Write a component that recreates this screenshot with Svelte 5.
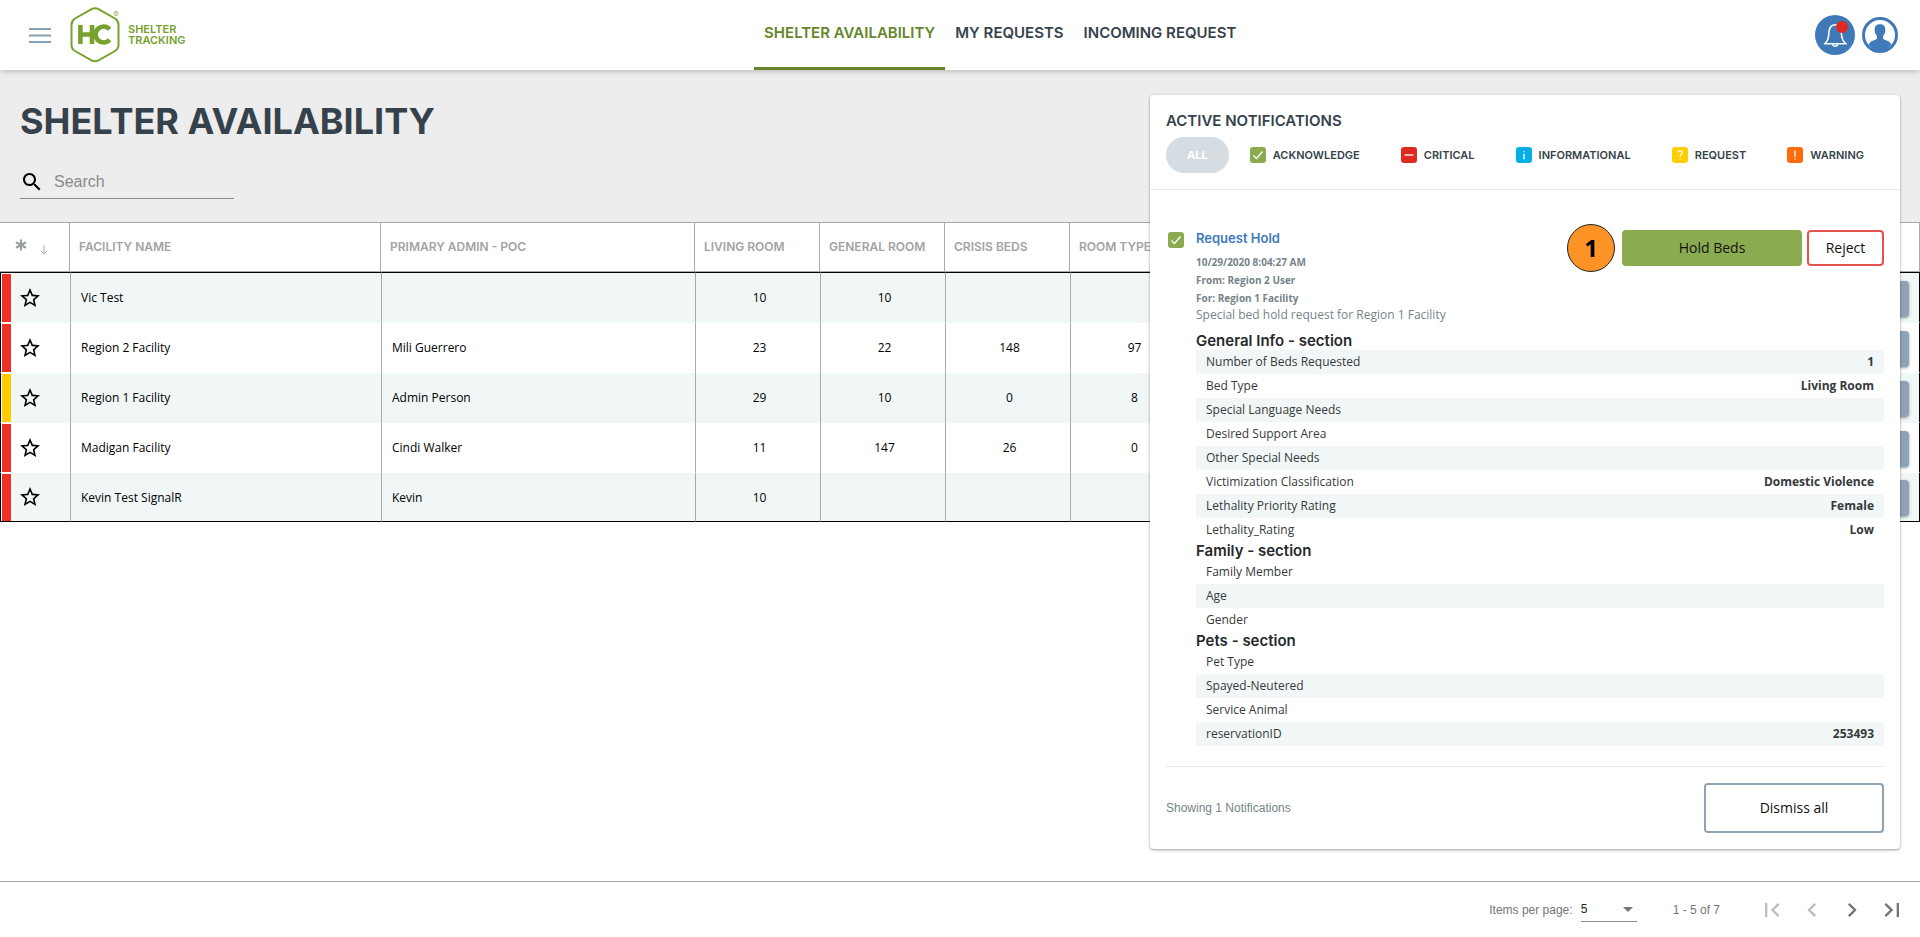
<script>
  const tabs = ['SHELTER AVAILABILITY', 'MY REQUESTS', 'INCOMING REQUEST'];
  const columns = ['FACILITY NAME', 'PRIMARY ADMIN - POC', 'LIVING ROOM', 'GENERAL ROOM', 'CRISIS BEDS', 'ROOM TYPE 4'];
  const facilities = [
    { name: 'Vic Test', poc: '', counts: ['10', '10', '', ''], status: 'red' },
    { name: 'Region 2 Facility', poc: 'Mili Guerrero', counts: ['23', '22', '148', '97'], status: 'red' },
    { name: 'Region 1 Facility', poc: 'Admin Person', counts: ['29', '10', '0', '8'], status: 'yellow' },
    { name: 'Madigan Facility', poc: 'Cindi Walker', counts: ['11', '147', '26', '0'], status: 'red' },
    { name: 'Kevin Test SignalR', poc: 'Kevin', counts: ['10', '', '', ''], status: 'red' }
  ];
  const filters = [
    { label: 'ACKNOWLEDGE', kind: 'check' },
    { label: 'CRITICAL', kind: 'minus' },
    { label: 'INFORMATIONAL', kind: 'info' },
    { label: 'REQUEST', kind: 'question' },
    { label: 'WARNING', kind: 'bang' }
  ];
  const details = [
    { heading: 'General Info - section' },
    { label: 'Number of Beds Requested', value: '1' },
    { label: 'Bed Type', value: 'Living Room' },
    { label: 'Special Language Needs', value: '' },
    { label: 'Desired Support Area', value: '' },
    { label: 'Other Special Needs', value: '' },
    { label: 'Victimization Classification', value: 'Domestic Violence' },
    { label: 'Lethality Priority Rating', value: 'Female' },
    { label: 'Lethality_Rating', value: 'Low' },
    { heading: 'Family - section' },
    { label: 'Family Member', value: '' },
    { label: 'Age', value: '' },
    { label: 'Gender', value: '' },
    { heading: 'Pets - section' },
    { label: 'Pet Type', value: '' },
    { label: 'Spayed-Neutered', value: '' },
    { label: 'Service Animal', value: '' },
    { label: 'reservationID', value: '253493' }
  ];
  const pagers = [
    { name: 'First page', d: 'M18.41 16.59L13.82 12l4.59-4.59L17 6l-6 6 6 6zM6 6h2v12H6z', off: true },
    { name: 'Previous page', d: 'M15.41 7.41L14 6l-6 6 6 6 1.41-1.41L10.83 12z', off: true },
    { name: 'Next page', d: 'M10 6L8.59 7.41 13.17 12l-4.58 4.59L10 18l6-6z', off: false },
    { name: 'Last page', d: 'M5.59 7.41L10.18 12l-4.59 4.59L7 18l6-6-6-6zM16 6h2v12h-2z', off: false }
  ];
</script>

{#snippet mark(kind)}
  <svg class="mark {kind}" viewBox="0 0 16 16" aria-hidden="true">
    <rect width="16" height="16" rx="3" />
    {#if kind === 'check'}
      <path d="M3.5 8.5l3 3 6-7" />
    {:else if kind === 'minus'}
      <path d="M3.5 8h9" />
    {:else if kind === 'info'}
      <path d="M8 4v1.3M8 6.8v5.4" />
    {:else if kind === 'question'}
      <path d="M5.8 5.6c.2-2.3 4.4-2.3 4.4 0C10.200 7.200 8 7.400 8 9.600M8 11.200v1.300" />
    {:else}
      <path d="M8 3.500v6.300M8 11.200v1.300" />
    {/if}
  </svg>
{/snippet}

<div class="page">
  <header class="topbar">
    <div class="brand">
      <button class="plain" aria-label="Menu">
        <svg width="24" height="18" viewBox="0 0 24 18"><path d="M1 3h22M1 9.500h22M1 16h22" stroke="#86a0b5" stroke-width="1.800" fill="none" /></svg>
      </button>
      <a class="logo" href="#home">
        <svg width="50" height="56" viewBox="0 0 50 56" aria-hidden="true">
          <path d="M21.500 2.200 Q25 .4 28.500 2.200 L45 11.500 Q48.500 13.700 48.500 17.500 V38 Q48.500 42 45 44 L28.500 53.300 Q25 55 21.500 53.300 L5 44 Q1.500 42 1.500 38 V17.500 Q1.500 13.700 5 11.500 Z" fill="none" stroke="#76a22d" stroke-width="2" />
          <path d="M10.400 18v19M22 18v19M10.400 27.500h11.600" fill="none" stroke="#76a22d" stroke-width="4.600" />
          <path d="M39.600 22.200A8 8 0 1 0 39.600 32.800" fill="none" stroke="#76a22d" stroke-width="4.600" />
          <circle cx="46" cy="6.500" r="2.200" fill="none" stroke="#76a22d" stroke-width=".6" />
          <path d="M45.300 7.700v-2.400h1q.7.600 0 1.300h-1m.900 0l.6 1.100" fill="none" stroke="#76a22d" stroke-width=".4" />
        </svg>
        <span class="word"><span>SHELTER</span><span>TRACKING</span></span>
      </a>
    </div>
    <nav>
      {#each tabs as tab, i}
        <a href="#tab" class:active={i === 0}>{tab}</a>
      {/each}
    </nav>
    <div class="account">
      <button class="plain" aria-label="Notifications">
        <svg width="40" height="40" viewBox="0 0 40 40">
          <circle cx="20" cy="20" r="20" fill="#4079b8" />
          <path d="M9.500 28.800Q13.500 26 13.700 19.500C13.900 12.500 16 9.800 20 9.800S26.300 12.500 26.500 19.500Q27 26 31.200 28.800Z" fill="none" stroke="#fff" stroke-width="1.600" stroke-linejoin="round" />
          <path d="M17.300 29.500q2.900 3.600 5.800 0" fill="none" stroke="#fff" stroke-width="1.500" />
          <circle cx="27" cy="12" r="6" fill="#df2a20" />
        </svg>
      </button>
      <button class="plain" aria-label="Account">
        <svg width="36" height="36" viewBox="0 0 36 36">
          <circle cx="18" cy="18" r="16.500" fill="#fff" stroke="#4079b8" stroke-width="3" />
          <path d="M18 7.200c-4 0-5.700 2.700-5.300 6.600.3 2.600 1.300 4.200 2.300 5.600v2.400c-1.600 1.400-6.500 1.800-8.200 5.400C9 31 13 33.500 18 33.500s9-2.500 11.200-6.300c-1.700-3.600-6.600-4-8.200-5.400v-2.400c1-1.400 2-3 2.300-5.600.4-3.900-1.300-6.600-5.300-6.600z" fill="#4079b8" />
        </svg>
      </button>
    </div>
  </header>

  <main>
    <section class="intro">
      <h1>SHELTER AVAILABILITY</h1>
      <label class="search">
        <svg width="24" height="24" viewBox="0 0 24 24" aria-hidden="true"><path d="M15.500 14h-.79l-.28-.27C15.410 12.590 16 11.110 16 9.500 16 5.910 13.090 3 9.500 3S3 5.910 3 9.500 5.910 16 9.500 16c1.610 0 3.090-.59 4.230-1.570l.27.28v.79l5 4.990L20.490 19l-4.990-5zm-6 0C7.010 14 5 11.990 5 9.500S7.010 5 9.500 5 14 7.010 14 9.500 11.990 14 9.500 14z" /></svg>
        <input type="text" placeholder="Search" aria-label="Search" />
      </label>
    </section>

    <table>
      <colgroup>
        <col class="c-star" /><col class="c-name" /><col class="c-poc" />
        <col class="c-num" /><col class="c-num" /><col class="c-num" /><col class="c-num" /><col />
      </colgroup>
      <thead>
        <tr>
          <th class="sorter">
            <span>
              <svg width="12" height="12" viewBox="0 0 12 12" aria-hidden="true"><path d="M6 .5v11M1 3.200l10 5.600M11 3.200L1 8.800" stroke="#9a9fa3" stroke-width="2.200" /></svg>
              <svg width="8" height="10" viewBox="0 0 8 10" aria-hidden="true"><path d="M4 0v9M.8 5.800L4 9l3.200-3.200" stroke="#a3b0b5" fill="none" /></svg>
            </span>
          </th>
          {#each columns as column}<th>{column}</th>{/each}
          <th></th>
        </tr>
      </thead>
      <tbody>
        {#each facilities as f}
          <tr>
            <td class="lead">
              <div>
                <i class={f.status}></i>
                <button class="plain" aria-label="Favorite {f.name}">
                  <svg width="24" height="24" viewBox="0 0 24 24"><path d="M22 9.240l-7.190-.62L12 2 9.190 8.630 2 9.240l5.460 4.730L5.820 21 12 17.270 18.180 21l-1.630-7.030L22 9.240zM12 15.400l-3.760 2.270 1-4.280-3.320-2.880 4.380-.38L12 6.100l1.710 4.040 4.380.38-3.320 2.880 1 4.280L12 15.400z" /></svg>
                </button>
              </div>
            </td>
            <td>{f.name}</td>
            <td>{f.poc}</td>
            {#each f.counts as count}<td class="num">{count}</td>{/each}
            <td class="act"><button aria-label="Open {f.name}"></button></td>
          </tr>
        {/each}
      </tbody>
    </table>
  </main>

  <footer class="pager">
    <label for="size">Items per page:</label>
    <span class="size">
      <select id="size"><option>5</option></select>
      <svg width="10" height="5" viewBox="0 0 10 5" aria-hidden="true"><path d="M0 0h10L5 5z" fill="#757575" /></svg>
    </span>
    <span class="range">1 - 5 of 7</span>
    <div class="steps">
      {#each pagers as p}
        <button class="plain" class:off={p.off} aria-label={p.name}>
          <svg width="28" height="28" viewBox="0 0 24 24"><path d={p.d} /></svg>
        </button>
      {/each}
    </div>
  </footer>

  <aside class="panel">
    <div class="panel-head">
      <h2>ACTIVE NOTIFICATIONS</h2>
      <div class="filters">
        <button class="chip all">ALL</button>
        {#each filters as f}
          <button class="chip">{@render mark(f.kind)}{f.label}</button>
        {/each}
      </div>
    </div>
    <div class="panel-body">
      {@render mark('check')}
      <div class="note">
        <div class="note-head">
          <div>
            <h3>Request Hold</h3>
            <p class="meta">10/29/2020 8:04:27 AM<br />From: Region 2 User<br />For: Region 1 Facility</p>
            <p class="desc">Special bed hold request for Region 1 Facility</p>
          </div>
          <div class="actions">
            <span class="step">1</span>
            <button class="hold">Hold Beds</button>
            <button class="reject">Reject</button>
          </div>
        </div>
        <div class="details">
          {#each details as d}
            {#if d.heading}
              <h4>{d.heading}</h4>
            {:else}
              <div class="row"><span>{d.label}</span><b>{d.value}</b></div>
            {/if}
          {/each}
        </div>
      </div>
    </div>
    <div class="panel-foot">
      <span>Showing 1 Notifications</span>
      <button class="dismiss">Dismiss all</button>
    </div>
  </aside>
</div>

<style>
  :global(body) { background: #fff; }
  * { box-sizing: border-box; margin: 0; }
  .page {
    position: relative;
    display: flex;
    flex-direction: column;
    min-height: 100vh;
    font-family: "Open Sans", "Noto Sans", sans-serif;
    color: #000;
  }
  button { font-family: inherit; cursor: pointer; }
  .plain { display: flex; padding: 0; border: 0; background: none; }

  .topbar {
    position: relative;
    display: flex;
    justify-content: space-between;
    height: 70px;
    padding: 0 22px 0 28px;
    background: #fff;
    box-shadow: 0 1px 6px rgba(0, 0, 0, 0.25);
  }
  .brand, .account { display: flex; align-items: center; }
  .brand { gap: 18px; }
  .account { gap: 7px; }
  .logo {
    display: flex;
    align-items: center;
    gap: 8px;
    color: #76a22d;
    font: 600 11px/11px Inter, sans-serif;
    text-decoration: none;
  }
  .word { display: flex; flex-direction: column; }
  nav { display: flex; font: 600 15px/20px Inter, sans-serif; }
  nav a {
    padding: 23px 10px 24px;
    border-bottom: 3px solid transparent;
    color: #36424b;
    text-decoration: none;
  }
  nav a.active { color: #668528; border-color: #668528; }

  main { flex: 1; }
  .intro { padding: 31px 20px 23px; background: #ededed; }
  h1 { color: #36424b; font: 700 36px/40px Inter, sans-serif; }
  .search {
    display: flex;
    align-items: center;
    gap: 10px;
    width: 214px;
    height: 34px;
    margin-top: 24px;
    border-bottom: 1px solid #8a8a8a;
  }
  .search svg { flex: none; }
  .search input {
    width: 100%;
    padding: 0;
    border: 0;
    outline: 0;
    background: none;
    font: 16px/20px "Liberation Sans", sans-serif;
  }
  .search input::placeholder { color: #8a8a8a; }

  table { width: 100%; border-spacing: 0; table-layout: fixed; }
  .c-star { width: 70px; }
  .c-name { width: 311px; }
  .c-poc { width: 314px; }
  .c-num { width: 125px; }
  th {
    height: 50px;
    padding: 0 0 0 9px;
    border: solid #a8a8a8;
    border-width: 1px 1px 1px 0;
    color: #a3a3a3;
    font: 600 12px/16px Inter, sans-serif;
    text-align: left;
    white-space: nowrap;
  }
  .sorter { padding-left: 15px; }
  .sorter span { display: flex; align-items: flex-end; gap: 13px; }
  .sorter svg:first-child { margin-bottom: 4px; }
  tbody tr { background: #fff; --line: #fff; }
  tbody tr:nth-child(odd) { background: #f1f7f7; --line: #f1f7f7; }
  td {
    height: 50px;
    padding: 0 0 0 10px;
    border: solid #a8a8a8;
    border-width: 0 0 1px 1px;
    border-bottom-color: var(--line);
    font-size: 12px;
    line-height: 18px;
  }
  tbody tr:first-child td { height: 51px; border-top: 1px solid #000; }
  tbody tr:last-child td { height: 49px; padding-top: 2px; border-bottom-color: #000; }
  .num { padding: 0 0 0 3px; text-align: center; }
  .lead, tbody tr:last-child .lead { padding: 0; border-left-color: #000; }
  .lead div { display: flex; align-items: center; gap: 7px; height: 49px; }
  tbody tr:last-child .lead div { height: 48px; }
  .lead i {
    align-self: stretch;
    width: 10px;
    border: solid #fff;
    border-width: 1px 0 0 1px;
  }
  .red { background: #ef3124; }
  .yellow { background: #ffcc00; }
  .act { padding: 2px 10px 0 0; border-right: 1px solid #000; text-align: right; }
  .act button {
    width: 100px;
    height: 36px;
    border: 0;
    border-radius: 4px;
    background: #8fa3b5;
    box-shadow: 0 1px 3px rgba(0, 0, 0, 0.4);
    vertical-align: middle;
  }

  .pager {
    display: flex;
    align-items: center;
    justify-content: flex-end;
    height: 56px;
    padding-right: 8px;
    border-top: 1px solid #a8a8a8;
    color: #757575;
    font: 12px/16px "Liberation Sans", sans-serif;
  }
  .size {
    display: flex;
    align-items: center;
    width: 56px;
    height: 24px;
    margin: 0 36px 0 8px;
    padding-right: 4px;
    border-bottom: 1px solid #8a8a8a;
  }
  .size select {
    flex: 1;
    padding: 0;
    border: 0;
    appearance: none;
    background: none;
    color: #212121;
    font: inherit;
  }
  .range { margin-right: 32px; }
  .steps { display: flex; }
  .steps button { justify-content: center; width: 40px; fill: #757575; }
  .steps .off { fill: #bdbdbd; }

  .panel {
    position: absolute;
    top: 95px;
    right: 20px;
    width: 750px;
    border-radius: 4px;
    background: #fff;
    box-shadow: 0 1px 3px rgba(0, 0, 0, 0.4);
  }
  .panel-head { padding: 16px; border-bottom: 1px solid #e8e8e8; }
  h2 { color: #36424b; font: 600 15px/20px Inter, sans-serif; }
  .filters { display: flex; justify-content: space-between; margin-top: 6px; }
  .chip {
    display: flex;
    align-items: center;
    gap: 7px;
    height: 36px;
    padding: 0 20px;
    border: 0;
    border-radius: 18px;
    background: none;
    color: #36424b;
    font: 600 11px/16px Inter, sans-serif;
  }
  .all { padding: 0 21px; background: #d5dce2; color: #fff; font-weight: 700; }
  .mark { flex: none; width: 16px; height: 16px; }
  .mark path { fill: none; stroke: #fff; stroke-width: 1.3; }
  .check { fill: #8aab4f; }
  .minus { fill: #df2a20; }
  .info { fill: #06aee6; }
  .question { fill: #ffcc00; }
  .bang { fill: #ff6a0a; }

  .panel-body { display: flex; gap: 12px; padding: 34px 16px 20px 18px; }
  .panel-body > :global(.mark) { margin-top: 8px; }
  .note { flex: 1; }
  .note-head { display: flex; justify-content: space-between; align-items: flex-start; }
  h3 { margin-top: 3px; color: #4079b8; font: 600 13px/22px Inter, sans-serif; }
  .meta { margin-top: 4px; color: #76848a; font-size: 10px; font-weight: 700; line-height: 18px; }
  .desc { color: #76848a; font-size: 12px; line-height: 16px; }
  .actions { display: flex; align-items: center; }
  .actions button, .dismiss {
    border: 2px solid;
    border-radius: 4px;
    background: #fff;
    font-size: 14px;
    font-weight: 500;
    line-height: 20px;
    color: #111;
  }
  .step {
    width: 48px;
    height: 48px;
    margin-right: 7px;
    border: 1px solid #222;
    border-radius: 50%;
    background: #ff9326;
    font-size: 24px;
    font-weight: 700;
    line-height: 46px;
    text-align: center;
  }
  .actions button { height: 36px; }
  .actions .hold { width: 180px; margin-right: 5px; background: #8aab4f; border-color: #8aab4f; }
  .actions .reject { width: 77px; border-color: #e5544c; }
  .details { margin-top: 9px; }
  h4 { color: #26292b; font: 600 15px/18px Inter, sans-serif; }
  .row {
    display: flex;
    justify-content: space-between;
    padding: 0 10px;
    color: #36393b;
    font-size: 12px;
    line-height: 24px;
  }
  .row b { font-weight: 700; }
  .row:nth-child(even) { background: #f1f7f7; }
  .panel-foot {
    display: flex;
    align-items: center;
    justify-content: space-between;
    margin: 0 16px;
    padding: 16px 0;
    border-top: 1px solid #e8e8e8;
    color: #76848a;
    font: 12px/16px "Liberation Sans", sans-serif;
  }
  .dismiss { width: 180px; height: 50px; border-color: #8fa3b5; font-family: "Open Sans", sans-serif; }
</style>
